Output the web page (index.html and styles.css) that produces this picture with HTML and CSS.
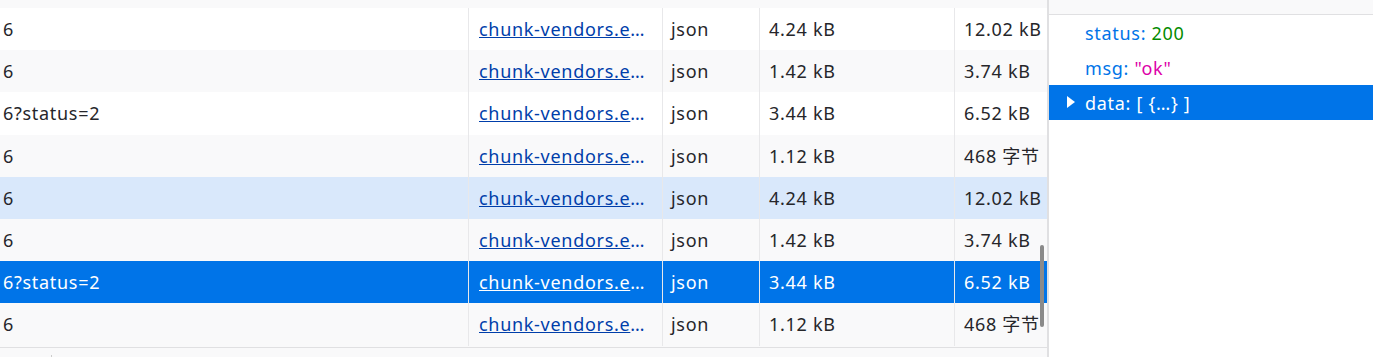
FILE: index.html
```html
<!DOCTYPE html>
<html>
<head>
  <title>Network</title>
  <link rel="stylesheet" href="styles.css">
</head>
<body>
  <div class="monitor">

    <div class="requests">
      <div class="row edge"></div>

      <div class="row">
        <div class="cell file">6</div>
        <div class="cell cause"><a href="#">chunk-vendors.e</a><span class="more">…</span></div>
        <div class="cell type">json</div>
        <div class="cell size">4.24 kB</div>
        <div class="cell total">12.02 kB</div>
      </div>
      <div class="row odd">
        <div class="cell file">6</div>
        <div class="cell cause"><a href="#">chunk-vendors.e</a><span class="more">…</span></div>
        <div class="cell type">json</div>
        <div class="cell size">1.42 kB</div>
        <div class="cell total">3.74 kB</div>
      </div>
      <div class="row">
        <div class="cell file">6?status=2</div>
        <div class="cell cause"><a href="#">chunk-vendors.e</a><span class="more">…</span></div>
        <div class="cell type">json</div>
        <div class="cell size">3.44 kB</div>
        <div class="cell total">6.52 kB</div>
      </div>
      <div class="row odd">
        <div class="cell file">6</div>
        <div class="cell cause"><a href="#">chunk-vendors.e</a><span class="more">…</span></div>
        <div class="cell type">json</div>
        <div class="cell size">1.12 kB</div>
        <div class="cell total">468 字节</div>
      </div>
      <div class="row hover">
        <div class="cell file">6</div>
        <div class="cell cause"><a href="#">chunk-vendors.e</a><span class="more">…</span></div>
        <div class="cell type">json</div>
        <div class="cell size">4.24 kB</div>
        <div class="cell total">12.02 kB</div>
      </div>
      <div class="row odd">
        <div class="cell file">6</div>
        <div class="cell cause"><a href="#">chunk-vendors.e</a><span class="more">…</span></div>
        <div class="cell type">json</div>
        <div class="cell size">1.42 kB</div>
        <div class="cell total">3.74 kB</div>
      </div>
      <div class="row selected">
        <div class="cell file">6?status=2</div>
        <div class="cell cause"><a href="#">chunk-vendors.e</a><span class="more">…</span></div>
        <div class="cell type">json</div>
        <div class="cell size">3.44 kB</div>
        <div class="cell total">6.52 kB</div>
      </div>
      <div class="row odd">
        <div class="cell file">6</div>
        <div class="cell cause"><a href="#">chunk-vendors.e</a><span class="more">…</span></div>
        <div class="cell type">json</div>
        <div class="cell size">1.12 kB</div>
        <div class="cell total">468 字节</div>
      </div>

      <div class="footer"><span class="tick"></span></div>
      <div class="scrollbar"></div>
    </div>

    <div class="details">
      <div class="toolbar"></div>
      <div class="prop"><span class="key">status:</span> <span class="num">200</span></div>
      <div class="prop"><span class="key">msg:</span> <span class="str">"ok"</span></div>
      <div class="prop selected">
        <svg class="twisty" width="8" height="12" viewBox="0 0 8 12"><path d="M0 0 L8 6 L0 12 Z" fill="#fff"/></svg>
        <span class="key">data:</span> [ {…} ]
      </div>
    </div>

  </div>
</body>
</html>
```

FILE: styles.css
```css
body {
  margin: 0;
  padding: 0;
  background-color: #fff;
  color: #26262a;
  font-family: "Noto Sans", "Noto Sans CJK SC", sans-serif;
  font-size: 18px;
  letter-spacing: 0.7px;
}

.monitor {
  display: flex;
  height: 357px;
  overflow: hidden;
}

/* request list */
.requests {
  position: relative;
  width: 1047px;
  flex-shrink: 0;
  border-right: 2px solid #e0e0e2;
  background-color: #f9f9fa;
}

.row {
  display: flex;
  height: 42.2px;
  line-height: 42px;
  background-color: #fff;
  white-space: nowrap;
}

.row.edge {
  height: 8px;
  background-color: #f9f9fa;
}

.row.odd {
  background-color: #f9f9fa;
}

.row.hover {
  background-color: #d9e8fb;
}

.row.selected {
  background-color: #0074e8;
  color: #fff;
}

.cell {
  overflow: hidden;
  border-right: 1px solid #e8e8ea;
}

.file {
  width: 465px;
  padding-left: 3px;
}

.cause {
  width: 183px;
  padding-left: 10px;
}

.cause a {
  color: #003eaa;
  text-decoration: underline;
}

.cause .more {
  color: #003eaa;
}

.selected .cause a,
.selected .cause .more {
  color: #fff;
}

.type {
  width: 88px;
  padding-left: 8px;
}

.size {
  width: 185px;
  padding-left: 9px;
}

.total {
  flex: 1;
  padding-left: 9px;
  border-right: none;
}

.footer {
  height: 10px;
  margin-top: 1px;
  border-top: 1px solid #e0e0e2;
  background-color: #f9f9fa;
  position: relative;
}

.tick {
  position: absolute;
  left: 51px;
  bottom: 0;
  width: 1px;
  height: 3px;
  background-color: #ccc;
}

.scrollbar {
  position: absolute;
  top: 245px;
  right: 3px;
  width: 4px;
  height: 82px;
  border-radius: 2px;
  background-color: #8a8a8a;
}

/* response panel */
.details {
  flex: 1;
  background-color: #fff;
}

.toolbar {
  height: 14px;
  border-bottom: 1px solid #e0e0e2;
  background-color: #f9f9fa;
}

.prop {
  height: 35px;
  line-height: 36px;
  padding-left: 36px;
  white-space: nowrap;
}

.prop .key {
  color: #0074e8;
}

.prop .num {
  color: #058b00;
}

.prop .str {
  color: #dd00a9;
}

.prop.selected {
  position: relative;
  background-color: #0074e8;
  color: #fff;
}

.prop.selected .key {
  color: #fff;
}

.twisty {
  position: absolute;
  left: 18px;
  top: 11px;
}
```
